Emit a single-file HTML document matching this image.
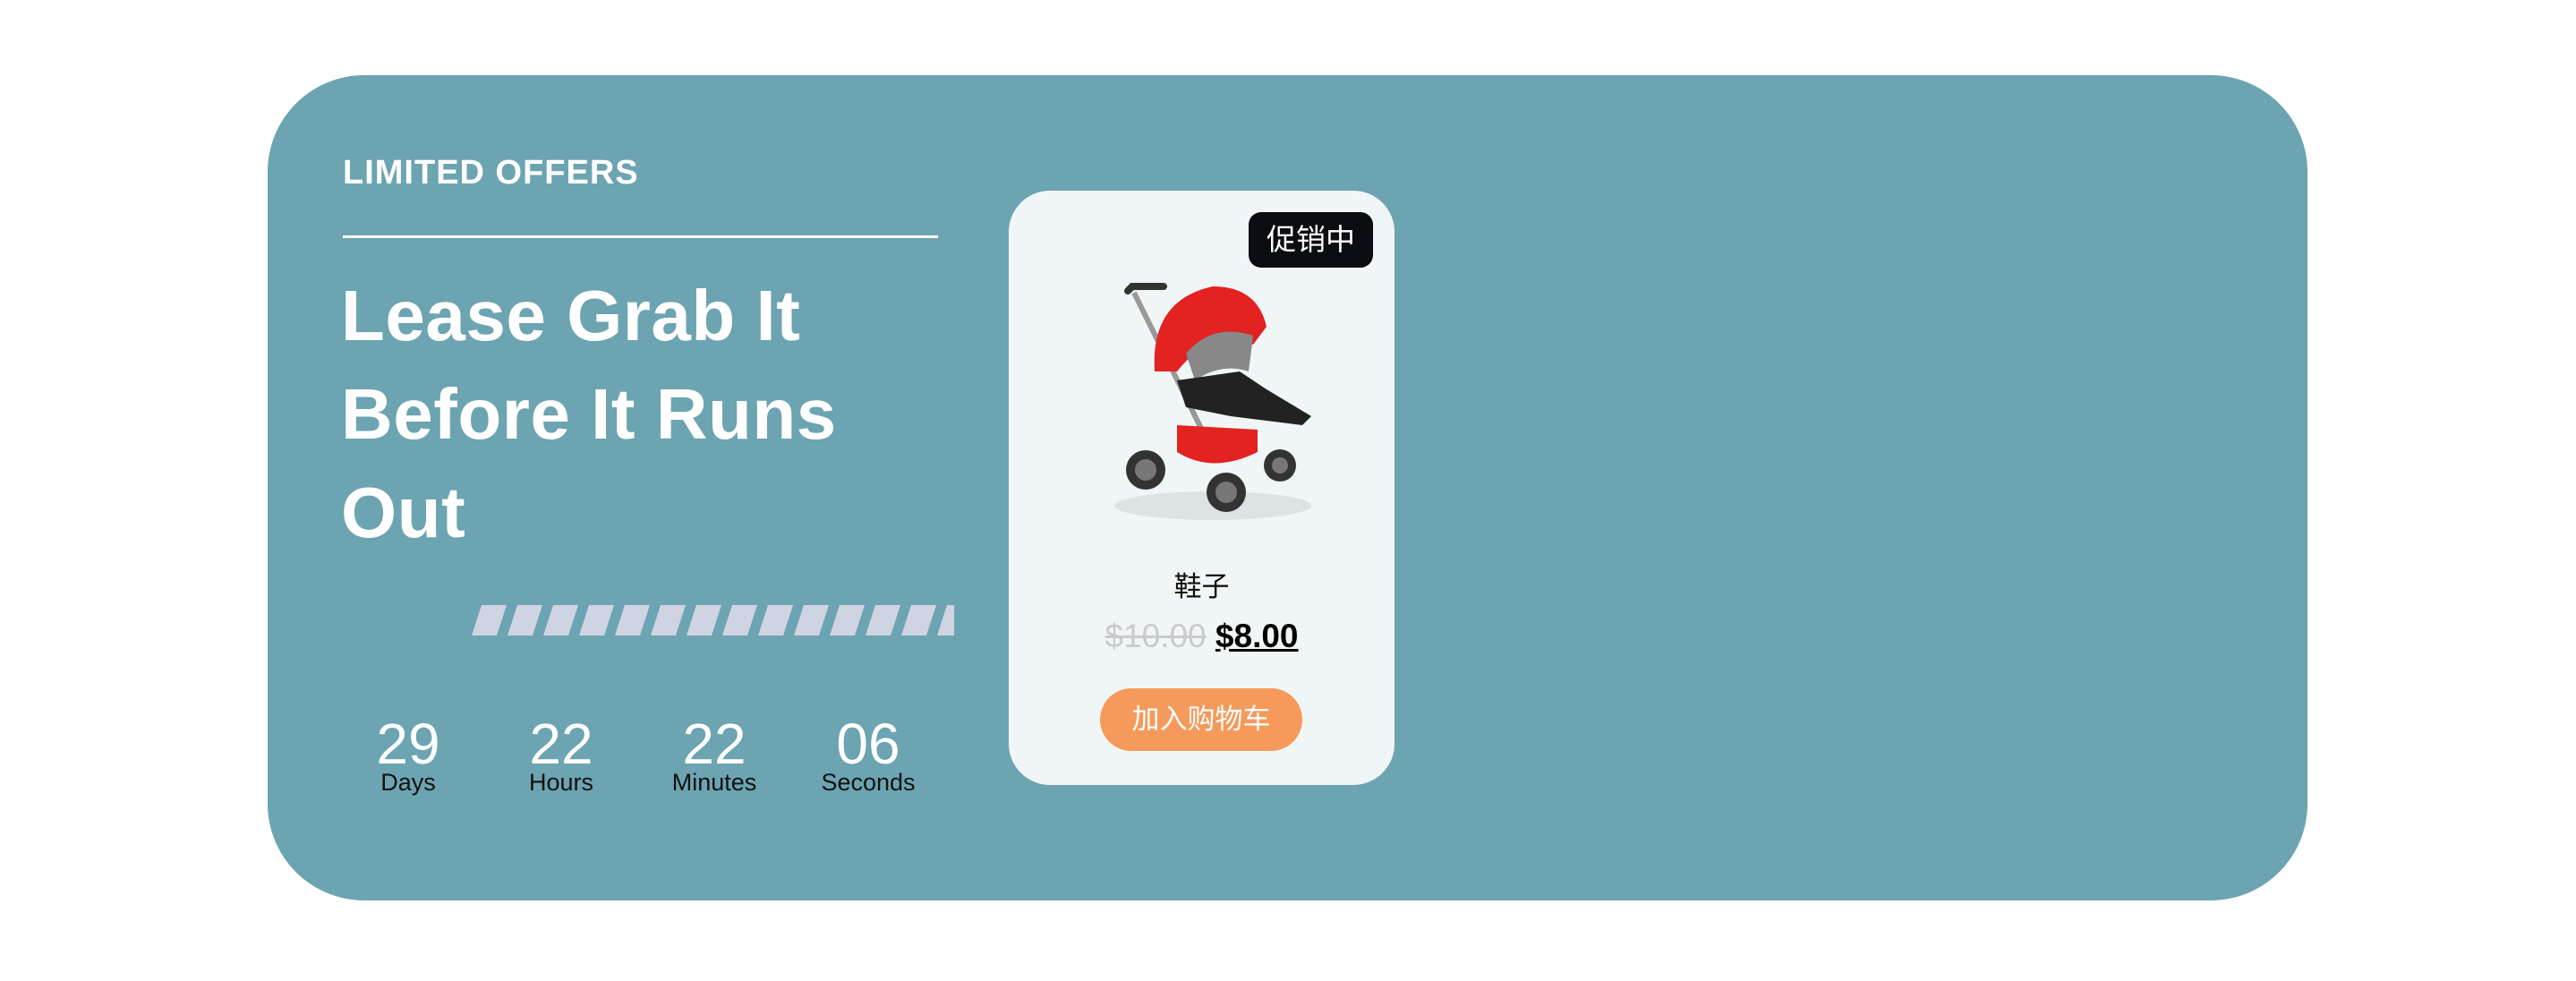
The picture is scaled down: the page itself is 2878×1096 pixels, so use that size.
<!DOCTYPE html>
<html><head><meta charset="utf-8"><style>
*{margin:0;padding:0;box-sizing:border-box}
body{width:2878px;height:1096px;background:#fff;position:relative;overflow:hidden;font-family:"Liberation Sans","Noto Sans CJK SC",sans-serif}
.panel{position:absolute;left:299px;top:84px;width:2279px;height:922px;background:#6ca4b1;border-radius:108px}
.abs{position:absolute}
.lo{left:383px;top:169px;font-size:38px;font-weight:bold;color:#fff;line-height:48px;letter-spacing:1px}
.hr{left:383px;top:263px;width:665px;height:3px;background:#fff}
.h1{left:381px;top:298px;font-size:80px;font-weight:bold;color:#fff;line-height:110px;width:780px;letter-spacing:0.5px}
.num{width:170px;text-align:center;color:#fff;font-size:64px;line-height:64px;top:799px}
.lab{width:170px;text-align:center;color:#111;font-size:27px;line-height:30px;top:859px}
.card{left:1127px;top:213px;width:431px;height:664px;background:#f0f6f6;border-radius:46px}
.badge{left:1395px;top:237px;width:139px;height:62px;background:#0b0d12;border-radius:14px;color:#fff;font-size:33px;line-height:62px;text-align:center}
.name{left:1127px;width:431px;text-align:center;top:636px;font-size:31px;line-height:40px;color:#111}
.price{left:1127px;width:431px;text-align:center;top:689px;font-size:37px;line-height:44px;font-weight:bold}
.old{color:#c9cbcc;text-decoration:line-through;font-weight:normal}
.new{color:#000;text-decoration:underline}
.btn{left:1229px;top:769px;width:226px;height:70px;background:#f59a5b;border-radius:35px;color:#fff;font-size:31px;line-height:70px;text-align:center}
</style></head><body>
<div class="panel"></div>
<div class="abs lo">LIMITED OFFERS</div>
<div class="abs hr"></div>
<div class="abs h1">Lease Grab It<br>Before It Runs<br>Out</div>
<svg class="abs" style="left:526px;top:676px" width="540" height="34">
<defs><pattern id="p" width="40" height="34" patternUnits="userSpaceOnUse"><polygon points="12,0 40,0 29,34 1,34" fill="#cfd4e3"/></pattern></defs>
<rect width="540" height="34" fill="url(#p)"/></svg>
<div class="abs num" style="left:371px">29</div><div class="abs lab" style="left:371px">Days</div>
<div class="abs num" style="left:542px">22</div><div class="abs lab" style="left:542px">Hours</div>
<div class="abs num" style="left:713px">22</div><div class="abs lab" style="left:713px">Minutes</div>
<div class="abs num" style="left:885px">06</div><div class="abs lab" style="left:885px">Seconds</div>
<div class="abs card"></div>
<div class="abs badge">促销中</div>
<svg class="abs" style="left:1205px;top:305px" width="290" height="290" viewBox="0 0 290 290">
<ellipse cx="150" cy="260" rx="110" ry="16" fill="#dde3e4"/>
<path d="M55 20 L60 15 L95 15" stroke="#333" stroke-width="8" fill="none" stroke-linecap="round"/>
<path d="M62 22 L150 200" stroke="#999" stroke-width="6"/>
<path d="M85 110 Q80 30 150 15 Q200 15 210 60 L195 80 Q150 60 110 110 Z" fill="#e32222"/>
<path d="M120 90 Q150 55 195 70 L190 110 Q160 100 130 120Z" fill="#888"/>
<path d="M110 120 L180 110 L210 130 L260 160 L250 170 L170 160 L120 150Z" fill="#222"/>
<path d="M110 200 Q150 225 200 200 L200 175 L110 170Z" fill="#e32222"/>
<circle cx="75" cy="220" r="22" fill="#333"/><circle cx="75" cy="220" r="12" fill="#777"/>
<circle cx="165" cy="245" r="22" fill="#333"/><circle cx="165" cy="245" r="12" fill="#777"/>
<circle cx="225" cy="215" r="18" fill="#333"/><circle cx="225" cy="215" r="9" fill="#777"/>
</svg>
<div class="abs name">鞋子</div>
<div class="abs price"><span class="old">$10.00</span> <span class="new">$8.00</span></div>
<div class="abs btn">加入购物车</div>
</body></html>
